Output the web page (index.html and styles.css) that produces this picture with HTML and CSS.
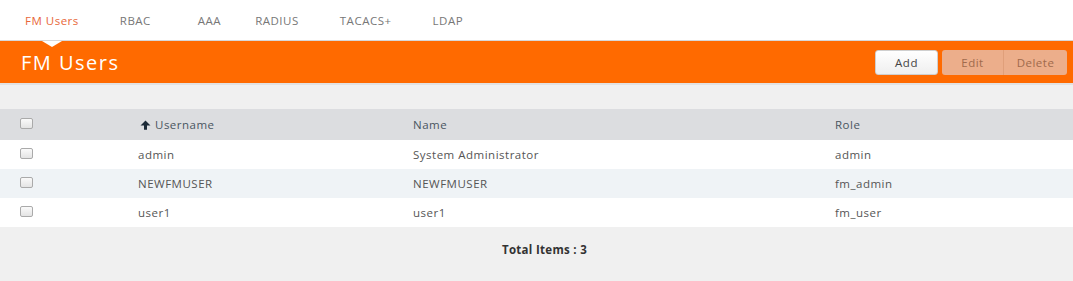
FILE: index.html
```html
<!DOCTYPE html>
<html lang="en">
<head>
  <meta charset="UTF-8">
  <title>FM Users</title>
  <link rel="stylesheet" href="styles.css">
</head>
<body>
  <!-- Tabs -->
  <nav class="tabs">
    <a class="tab active">FM Users</a>
    <a class="tab">RBAC</a>
    <a class="tab">AAA</a>
    <a class="tab">RADIUS</a>
    <a class="tab">TACACS+</a>
    <a class="tab">LDAP</a>
  </nav>

  <!-- Title bar -->
  <div class="title-bar">
    <span class="notch"></span>
    <h1>FM Users</h1>
    <div class="actions">
      <button class="btn btn-add">Add</button>
      <div class="btn-group">
        <button class="btn btn-off">Edit</button>
        <button class="btn btn-off">Delete</button>
      </div>
    </div>
  </div>

  <div class="spacer"></div>

  <!-- Table -->
  <div class="grid">
    <div class="row head">
      <span class="cell"><span class="check"></span></span>
      <span class="cell sort">
        <svg class="arrow" width="11" height="10" viewBox="0 0 11 10">
          <path d="M5.5 0.5 L10.5 5.5 L7 5.5 L7 9.8 L4 9.8 L4 5.5 L0.5 5.5 Z" fill="#1c2a38"/>
        </svg>Username</span>
      <span class="cell">Name</span>
      <span class="cell">Role</span>
    </div>
    <div class="row">
      <span class="cell"><span class="check"></span></span>
      <span class="cell">admin</span>
      <span class="cell">System Administrator</span>
      <span class="cell">admin</span>
    </div>
    <div class="row alt">
      <span class="cell"><span class="check"></span></span>
      <span class="cell">NEWFMUSER</span>
      <span class="cell">NEWFMUSER</span>
      <span class="cell">fm_admin</span>
    </div>
    <div class="row">
      <span class="cell"><span class="check"></span></span>
      <span class="cell">user1</span>
      <span class="cell">user1</span>
      <span class="cell">fm_user</span>
    </div>
  </div>

  <div class="footer">Total Items : 3</div>
</body>
</html>
```

FILE: styles.css
```css
/* General */
body {
  margin: 0;
  font-family: "Open Sans", "DejaVu Sans", sans-serif;
  font-size: 11.5px;
  letter-spacing: 0.5px;
  color: #555;
  background: #f0f0f0;
}

/* Tabs */
.tabs {
  display: flex;
  height: 40px;
  align-items: center;
  background: white;
  padding-left: 25px;
}

.tab {
  color: #777;
}

.tab:nth-child(1) { margin-right: 41px; }
.tab:nth-child(2) { margin-right: 47px; }
.tab:nth-child(3) { margin-right: 34px; }
.tab:nth-child(4) { margin-right: 41px; }
.tab:nth-child(5) { margin-right: 41px; }

.tab.active {
  color: #e8673a;
}

/* Title Bar */
.title-bar {
  position: relative;
  display: flex;
  align-items: center;
  justify-content: space-between;
  height: 42px;
  background: #ff6a00;
  border-top: 1px solid #d8d8d8;
  padding: 0 6px 0 21px;
}

.notch {
  position: absolute;
  top: 0;
  left: 42px;
  width: 0;
  height: 0;
  border-left: 10px solid transparent;
  border-right: 10px solid transparent;
  border-top: 6px solid white;
}

.title-bar h1 {
  margin: 0;
  font-weight: 400;
  font-size: 20px;
  color: #fff;
  letter-spacing: 1.5px;
}

.actions {
  display: flex;
  gap: 4px;
}

.btn {
  font-family: inherit;
  font-size: 11.5px;
  letter-spacing: 0.5px;
  height: 25px;
  border-radius: 3px;
  cursor: pointer;
}

.btn-add {
  width: 63px;
  background: linear-gradient(#ffffff, #efefef);
  border: 1px solid #cfcfcf;
  color: #444;
}

.btn-group {
  display: flex;
}

.btn-off {
  background: #ecae8b;
  border: none;
  color: #a06a4c;
  border-radius: 0;
}

.btn-group .btn-off:first-child {
  width: 62px;
  border-radius: 3px 0 0 3px;
  border-right: 1px solid #e09f7a;
}

.btn-group .btn-off:last-child {
  width: 63px;
  border-radius: 0 3px 3px 0;
}

.spacer {
  height: 24px;
  border-top: 2px solid #e2e2e2;
  background: #f0f0f0;
}

/* Table */
.row {
  display: grid;
  grid-template-columns: 138px 275px 422px 1fr;
  height: 29px;
  align-items: center;
  background: white;
  color: #555;
}

.row.head {
  height: 31px;
  background: #dcdde0;
  color: #4a5560;
}

.row.alt {
  background: #eff3f6;
}

.cell:first-child {
  padding-left: 20px;
  display: flex;
  align-items: center;
  margin-top: -3px;
}

.check {
  display: inline-block;
  width: 11px;
  height: 9px;
  border: 1px solid #aaa;
  border-radius: 2px;
  background: linear-gradient(#fafafa, #e4e4e4);
}

.sort {
  display: flex;
  align-items: center;
}

.arrow {
  margin: 0 4px 0 2px;
}

/* Footer */
.footer {
  height: 54px;
  line-height: 45px;
  text-align: center;
  font-weight: 700;
  letter-spacing: 0.3px;
  color: #333;
  padding-left: 16px;
}
```
